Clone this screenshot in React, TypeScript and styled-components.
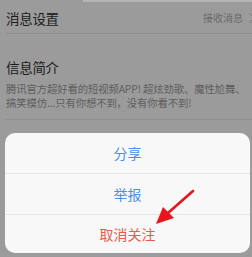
import React from "react";
import styled, { createGlobalStyle } from "styled-components";

const Global = createGlobalStyle`
  html, body { margin: 0; padding: 0; }
  body { font-family: "Noto Sans CJK SC", "Liberation Sans", sans-serif; }
`;

const Screen = styled.div`
  position: relative;
  width: 252px;
  height: 257px;
  overflow: hidden;
  background: #9b9b9b;
  display: flex;
  flex-direction: column;
`;

const TopEdge = styled.div`
  height: 2px;
  display: flex;
`;

const TopEdgeLight = styled.div`
  margin-left: 83px;
  flex: 1;
  background: #b4b4b4;
`;

const SettingRow = styled.div`
  height: 31px;
  margin-left: 6px;
  display: flex;
  align-items: center;
  justify-content: space-between;
  border-bottom: 1px solid #8e8e8e;
`;

const Title = styled.div`
  font-size: 13.5px;
  line-height: 18px;
  color: #1c1c1c;
  letter-spacing: -0.3px;
`;

const RowValue = styled.div`
  display: flex;
  align-items: center;
  gap: 5px;
  font-size: 10px;
  color: #6a6a6a;
  margin-right: -3px;
`;

const Intro = styled.div`
  margin-left: 6px;
  padding-top: 24px;
  padding-bottom: 9px;
  border-bottom: 1px solid #8e8e8e;
  display: flex;
  flex-direction: column;
  gap: 6px;
`;

const Desc = styled.div`
  font-size: 10.4px;
  line-height: 14px;
  letter-spacing: -0.15px;
  color: #5e5e5e;
  white-space: nowrap;
`;

const Sheet = styled.div`
  position: absolute;
  left: 5px;
  right: 2px;
  top: 133px;
  bottom: 4px;
  background: #f8f8f8;
  border-radius: 10px;
  display: flex;
  flex-direction: column;
  overflow: hidden;
`;

const SheetItem = styled.div<{ $danger?: boolean; $h: number }>`
  height: ${(p) => p.$h}px;
  display: flex;
  align-items: center;
  justify-content: center;
  font-size: 14px;
  color: ${(p) => (p.$danger ? "#ec5a4f" : "#4b8ef0")};
  & + & {
    border-top: 1px solid #e6e6e6;
  }
`;

const Arrow = styled.svg`
  position: absolute;
  left: 150px;
  top: 185px;
  width: 50px;
  height: 45px;
`;

export default function App() {
  return (
    <>
      <Global />
      <Screen>
        <TopEdge>
          <TopEdgeLight />
        </TopEdge>
        <SettingRow>
          <Title>消息设置</Title>
          <RowValue>
            接收消息
            <svg width="7" height="12" viewBox="0 0 7 12">
              <path d="M1 1 L6 6 L1 11" fill="none" stroke="#7a7a7a" strokeWidth="1" />
            </svg>
          </RowValue>
        </SettingRow>
        <Intro>
          <Title>信息简介</Title>
          <div>
            <Desc>腾讯官方超好看的短视频APP! 超炫劲歌、魔性尬舞、</Desc>
            <Desc>搞笑模仿...只有你想不到，没有你看不到!</Desc>
          </div>
        </Intro>
        <Sheet>
          <SheetItem $h={41}>分享</SheetItem>
          <SheetItem $h={40}>举报</SheetItem>
          <SheetItem $h={39} $danger>取消关注</SheetItem>
        </Sheet>
        <Arrow viewBox="0 0 50 45">
          <line x1="43" y1="6" x2="18" y2="28" stroke="#e8161c" strokeWidth="2.6" strokeLinecap="round" />
          <polygon points="6,39 13,22 24,33" fill="#e8161c" />
        </Arrow>
      </Screen>
    </>
  );
}
